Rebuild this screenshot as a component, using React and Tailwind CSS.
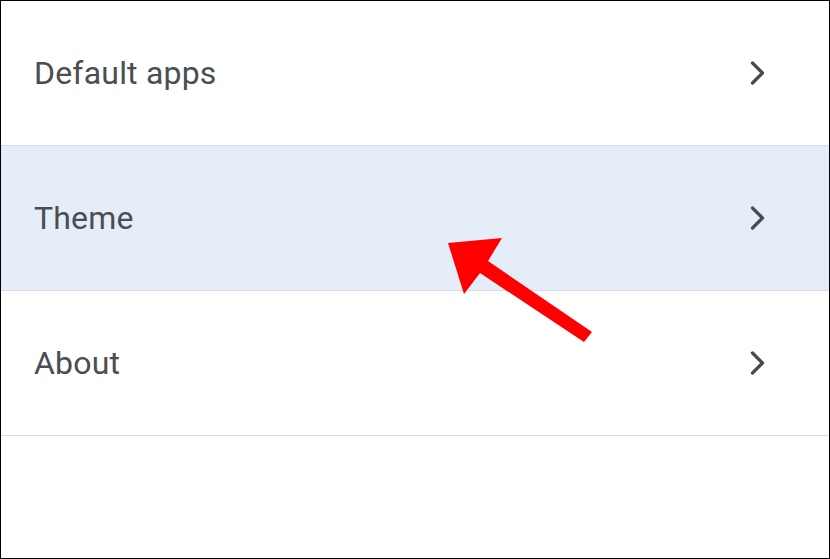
const rows = [
  { label: 'Default apps' },
  { label: 'Theme', active: true },
  { label: 'About' },
]

function Chevron() {
  return (
    <svg width="20" height="28" viewBox="0 0 20 28" fill="none">
      <path d="M4.5 4 L14.5 14 L4.5 24" stroke="#474b50" strokeWidth="3.2" strokeLinecap="round" strokeLinejoin="round" />
    </svg>
  )
}

export default function App() {
  return (
    <div className="relative w-[830px] h-[559px] border border-black bg-white overflow-hidden" style={{ fontFamily: 'Roboto, "Noto Sans", sans-serif' }}>
      <div className="flex flex-col">
        {rows.map(({ label, active }) => (
          <div
            key={label}
            className={`h-[145px] flex items-center justify-between pl-[33px] pr-[61px] border-b border-[#d7dde3] ${active ? 'bg-[#e5edf9]' : 'bg-white'}`}
          >
            <span className="text-[32px] text-[#4a4e52] leading-none tracking-[0.2px]">{label}</span>
            <Chevron />
          </div>
        ))}
      </div>

      <svg className="absolute left-0 top-0 pointer-events-none" width="830" height="559">
        <polygon
          points="447,242 501,237 487,260 591,331 583,341 479,272 463,293"
          fill="#ff0000"
        />
      </svg>
    </div>
  )
}
